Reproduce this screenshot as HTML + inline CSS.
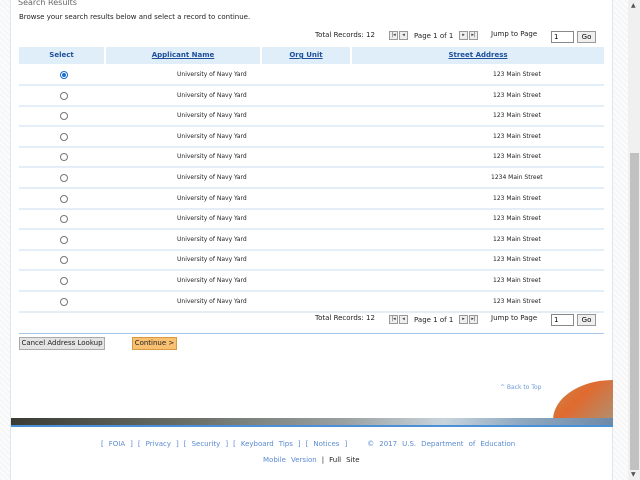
<!DOCTYPE html>
<html><head><meta charset="utf-8"><style>
*{margin:0;padding:0;box-sizing:border-box}
body{width:640px;height:480px;overflow:hidden;position:relative;font-family:"DejaVu Sans","Liberation Sans",sans-serif;background:repeating-linear-gradient(45deg,#f6f6f6 0 2px,#fcfcfc 2px 4px)}
.a{position:absolute;white-space:nowrap}
#box{position:absolute;left:10px;top:0;width:603px;height:480px;background:#fff;border-left:1px solid #dbe6f2;border-right:1px solid #dbe6f2}
.t{font-size:7px;color:#222}
.pgs{display:flex;gap:1px}
.pg{display:block;width:9px;height:9px;border:1px solid #999;background:#eee;font-size:5px;line-height:7px;text-align:center;color:#333}
.inp{border:1px solid #888;background:#fff;width:23px;height:12px;font-size:7px;padding-left:2px;line-height:10px}
.go{border:1px solid #999;background:#efefef;width:19px;height:12px;font-size:7px;text-align:center;line-height:10px}
.hd{font-size:7px;font-weight:bold;color:#1f4f9a;text-align:center;top:47px;height:17px;line-height:17px;background:#dfeef9}
.hd u{text-decoration:underline}
.row{position:absolute;left:19px;width:585px;height:2px;background:#e3eef8}
.rad{position:absolute;left:60px;width:8px;height:8px;border:1px solid #777;border-radius:50%;background:#fff}
.rad.on{border-color:#1a6fd0}
.rad.on::after{content:"";position:absolute;left:1px;top:1px;width:4px;height:4px;border-radius:50%;background:#1a6fd0}
.c{font-size:6px;color:#222}
.f{font-size:7px;color:#5a8ad0;word-spacing:2.8px}
</style></head><body>
<div id="box"></div>
<div class="a" style="left:18px;top:-2px;font-size:8px;color:#666">Search Results</div>
<div class="a t" style="left:19px;top:13px">Browse your search results below and select a record to continue.</div>

<div class="a t" style="left:315px;top:31px">Total Records: 12</div>
<div class="a pgs" style="left:389px;top:31px"><span class="pg">|◂</span><span class="pg">◂</span></div>
<div class="a t" style="left:414px;top:32px">Page 1 of 1</div>
<div class="a pgs" style="left:459px;top:31px"><span class="pg">▸</span><span class="pg">▸|</span></div>
<div class="a t" style="left:491px;top:30px">Jump to Page</div>
<div class="a inp" style="left:551px;top:31px">1</div>
<div class="a go" style="left:577px;top:31px">Go</div>

<div class="a hd" style="left:19px;width:85px">Select</div>
<div class="a hd" style="left:106px;width:154px"><u>Applicant Name</u></div>
<div class="a hd" style="left:262px;width:88px"><u>Org Unit</u></div>
<div class="a hd" style="left:352px;width:252px"><u>Street Address</u></div>

<div id="rows"></div>
<script>
var h='';
for(var i=0;i<12;i++){var y=75+i*20.6;
h+='<div class="rad'+(i==0?' on':'')+'" style="top:'+(y-4)+'px"></div>';
h+='<div class="a c" style="left:177px;top:'+(y-4)+'px">University of Navy Yard</div>';
h+='<div class="a c" style="left:'+(i==5?491:493)+'px;top:'+(y-4)+'px">'+(i==5?'1234':'123')+' Main Street</div>';
h+='<div class="row" style="top:'+(y+9)+'px"></div>';}
document.getElementById('rows').innerHTML=h;
</script>

<div class="a t" style="left:315px;top:314px">Total Records: 12</div>
<div class="a pgs" style="left:389px;top:315px"><span class="pg">|◂</span><span class="pg">◂</span></div>
<div class="a t" style="left:414px;top:316px">Page 1 of 1</div>
<div class="a pgs" style="left:459px;top:315px"><span class="pg">▸</span><span class="pg">▸|</span></div>
<div class="a t" style="left:491px;top:314px">Jump to Page</div>
<div class="a inp" style="left:551px;top:314px">1</div>
<div class="a go" style="left:577px;top:314px">Go</div>
<div class="a" style="left:19px;top:333px;width:585px;height:1px;background:#a8c8e8"></div>

<div class="a" style="left:19px;top:337px;width:86px;height:13px;background:#e4e4e4;border:1px solid #aaa;font-size:7px;line-height:11px;text-align:center;color:#222">Cancel Address Lookup</div>
<div class="a" style="left:132px;top:337px;width:45px;height:13px;background:#f8c070;border:1px solid #d89a40;font-size:7px;line-height:11px;text-align:center;color:#222">Continue &gt;</div>

<div class="a" style="left:500px;top:384px;font-size:6px;color:#6a9ad8">^ Back to Top</div>
<div class="a" style="left:553px;top:380px;width:60px;height:40px;background:linear-gradient(135deg,#c88848,#e06a30 45%,#b09070);border-top-left-radius:60px 40px"></div>
<div class="a" style="left:11px;top:418px;width:602px;height:8px;background:linear-gradient(90deg,#3a3c34,#6a7068 30%,#9aa0a0 55%,#c8d4dc 72%,#8ea8c0 85%,#6f8aa8)"></div>
<div class="a" style="left:11px;top:425px;width:602px;height:2px;background:#4a90d8"></div>

<div class="a f" style="left:101px;top:440px">[ FOIA ] [ Privacy ] [ Security ] [ Keyboard Tips ] [ Notices ] &nbsp;&nbsp; © 2017 U.S. Department of Education</div>
<div class="a f" style="left:263px;top:456px">Mobile Version <span style="color:#222">| Full Site</span></div>

<div class="a" style="left:628px;top:0;width:12px;height:480px;background:#f0f0f0"></div>
<div class="a" style="left:630px;top:153px;width:9px;height:317px;background:#c1c1c1"></div>
<div class="a" style="left:631px;top:2px;font-size:6px;color:#555">▲</div>
<div class="a" style="left:631px;top:471px;font-size:6px;color:#555">▼</div>
</body></html>
